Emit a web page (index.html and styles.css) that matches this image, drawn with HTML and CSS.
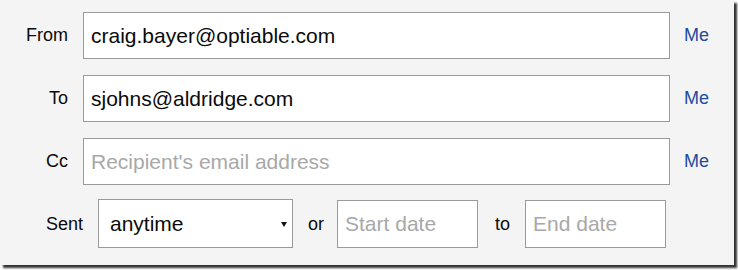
FILE: index.html
```html
<!DOCTYPE html>
<html>
<head>
<meta charset="utf-8">
<link rel="stylesheet" href="styles.css">
</head>
<body>
<div class="panel">
  <div class="row">
    <label class="label">From</label>
    <input class="field field-wide" type="text" value="craig.bayer@optiable.com">
    <a class="me">Me</a>
  </div>
  <div class="row">
    <label class="label">To</label>
    <input class="field field-wide" type="text" value="sjohns@aldridge.com">
    <a class="me">Me</a>
  </div>
  <div class="row">
    <label class="label">Cc</label>
    <input class="field field-wide" type="text" placeholder="Recipient's email address">
    <a class="me">Me</a>
  </div>
  <div class="row row-sent">
    <label class="label label-sent">Sent</label>
    <div class="select">
      <span>anytime</span>
      <svg class="caret" width="6" height="5" viewBox="0 0 6 5"><path d="M0 0H6L3 5Z" fill="#111"/></svg>
    </div>
    <span class="sep">or</span>
    <input class="field field-date" type="text" placeholder="Start date">
    <span class="sep sep-to">to</span>
    <input class="field field-date" type="text" placeholder="End date">
  </div>
</div>
</body>
</html>
```

FILE: styles.css
```css
html, body {
  margin: 0;
  padding: 0;
  background: #ffffff;
}
body {
  width: 738px;
  height: 270px;
  overflow: hidden;
  font-family: "Liberation Sans", Arial, sans-serif;
}
.panel {
  width: 734px;
  height: 265px;
  box-sizing: border-box;
  background: #f4f4f4;
  box-shadow: 3px 3px 2px rgba(0, 0, 0, 0.8);
  padding-top: 12px;
  display: flex;
  flex-direction: column;
  gap: 16px;
}
.row {
  display: flex;
  align-items: center;
  height: 47px;
}
.row-sent {
  height: 48px;
  margin-top: -1px;
}
.label {
  width: 68px;
  margin-right: 15px;
  text-align: right;
  font-size: 18px;
  color: #0a0a0a;
}
.label-sent {
  width: 83px;
}
.field {
  box-sizing: border-box;
  height: 47px;
  border: 1px solid #9a9a9a;
  background: #ffffff;
  font-family: "Liberation Sans", Arial, sans-serif;
  font-size: 21px;
  color: #0a0a0a;
  padding: 0 0 0 7px;
  margin: 0;
  outline: none;
  border-radius: 0;
}
.field::placeholder {
  color: #a8a8a8;
}
.field-wide {
  width: 587px;
}
.me {
  margin-left: 14px;
  font-size: 18px;
  color: #1d4b9e;
}
.select {
  box-sizing: border-box;
  width: 195px;
  height: 49px;
  margin-top: -1px;
  border: 1px solid #9a9a9a;
  background: #ffffff;
  display: flex;
  align-items: center;
  justify-content: space-between;
  padding: 0 5px 0 11px;
  font-size: 21px;
  color: #0a0a0a;
}
.caret {
  display: block;
  margin-top: 2px;
}
.sep {
  font-size: 18px;
  color: #0a0a0a;
  margin: 0 13px 0 15px;
}
.sep-to {
  margin: 0 15px 0 17px;
}
.field-date {
  width: 141px;
  height: 48px;
  padding-left: 7px;
}
```
